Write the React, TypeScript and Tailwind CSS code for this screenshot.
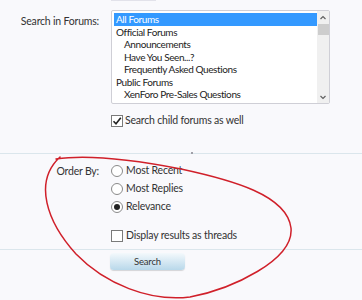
import React from "react";

const forums = [
  { name: "All Forums", depth: 0, selected: true },
  { name: "Official Forums", depth: 0 },
  { name: "Announcements", depth: 1 },
  { name: "Have You Seen...?", depth: 1 },
  { name: "Frequently Asked Questions", depth: 1 },
  { name: "Public Forums", depth: 0 },
  { name: "XenForo Pre-Sales Questions", depth: 1 },
];

function Radio({ checked }: { checked?: boolean }) {
  return (
    <span className="w-[12px] h-[12px] rounded-full border border-[#8a8a8a] bg-white flex items-center justify-center shrink-0">
      {checked && <span className="w-[6px] h-[6px] rounded-full bg-[#222]" />}
    </span>
  );
}

function Check({ checked }: { checked?: boolean }) {
  return (
    <span className="w-[12px] h-[12px] border border-[#7a7a7a] bg-white flex items-center justify-center shrink-0">
      {checked && (
        <svg width="10" height="10" viewBox="0 0 10 10">
          <path d="M1.5 5.2 L4 7.8 L8.8 1.8" fill="none" stroke="#222" strokeWidth="1.6" />
        </svg>
      )}
    </span>
  );
}

export default function App() {
  return (
    <div
      className="relative w-[362px] h-[300px] bg-[#f9f9fc] text-[#333] overflow-hidden tracking-[-0.2px]"
      style={{ fontFamily: "Lato, 'Noto Sans', sans-serif" }}
    >
      {/* Previous field edge */}
      <div className="ml-[111px] w-[45px] h-[1px] bg-[#e2e2ea]" />

      {/* Search in forums */}
      <div className="flex pt-[9px]">
        <div className="w-[99px] text-right text-[10.5px] leading-[20px] pt-[1px]">Search in Forums:</div>
        <div className="ml-[12px]">
          <div className="w-[219px] h-[94px] border border-[#cfcfd6] rounded-[2px] bg-white flex">
            <div className="flex-1 pl-[2px] pt-[2px] text-[10px] tracking-[-0.4px] text-[#222]">
              {forums.map((f) => (
                <div
                  key={f.name}
                  className={
                    "h-[12.5px] leading-[12.5px] whitespace-nowrap " +
                    (f.selected ? "bg-[#3399ff] text-white " : "") +
                    (f.depth ? "pl-[10px]" : "pl-[2px]")
                  }
                >
                  {f.name}
                </div>
              ))}
            </div>
            <div className="w-[12px] bg-[#f0f0f0] flex flex-col items-center text-[#555]">
              <svg width="8" height="8" viewBox="0 0 8 8" className="mt-[3px]">
                <path d="M1.5 5 L4 2.5 L6.5 5" fill="none" stroke="#606060" strokeWidth="1.2" />
              </svg>
              <div className="w-[11px] h-[11px] bg-[#cdcdcd] mt-[2px]" />
              <div className="flex-1" />
              <svg width="8" height="8" viewBox="0 0 8 8" className="mb-[2px]">
                <path d="M1.5 3 L4 5.5 L6.5 3" fill="none" stroke="#606060" strokeWidth="1.2" />
              </svg>
            </div>
          </div>
          <label className="flex items-center gap-[1px] mt-[10px] h-[14px] text-[10.5px]">
            <Check checked />
            <span className="ml-[1px]">Search child forums as well</span>
          </label>
        </div>
      </div>

      {/* Divider */}
      <div className="relative mt-[25px] h-[1px] bg-[#dbe6ec]">
        <span className="absolute left-[191px] top-[-1px] w-[2px] h-[2px] bg-[#a0a0a8]" />
      </div>

      {/* Order by */}
      <div className="flex pt-[8px] text-[10.5px]">
        <div className="w-[99px] text-right leading-[18px]">Order By:</div>
        <div className="ml-[12px] flex flex-col">
          <label className="flex items-center gap-[3px] h-[18px]"><Radio /><span>Most Recent</span></label>
          <label className="flex items-center gap-[3px] h-[18px]"><Radio /><span>Most Replies</span></label>
          <label className="flex items-center gap-[3px] h-[18px]"><Radio checked /><span>Relevance</span></label>
          <label className="flex items-center gap-[3px] h-[18px] mt-[11px]"><Check /><span>Display results as threads</span></label>
        </div>
      </div>

      <div className="mt-[4px] h-[1px] bg-[#dbe6ec]" />

      <div className="flex pl-[110px] pt-[3px]">
        <button className="w-[75px] h-[17px] rounded-[4px] text-[9.5px] leading-[17px] text-[#333] bg-gradient-to-b from-[#f4f9fc] to-[#b8d8ea] shadow-[0_1px_1px_rgba(0,0,0,0.15)]">
          Search
        </button>
      </div>

      {/* Hand-drawn annotation */}
      <svg className="absolute left-0 top-0 pointer-events-none" width="362" height="300" viewBox="0 0 362 300">
        <path
          d="M56 159 C 90 154, 140 161, 181 169 C 232 180, 287 195, 291 228 C 294 260, 232 289, 190 297 C 150 302, 105 284, 76 254 C 47 222, 33 182, 60 157"
          fill="none"
          stroke="#d0202a"
          strokeWidth="1.5"
          strokeLinecap="round"
        />
      </svg>
    </div>
  );
}
